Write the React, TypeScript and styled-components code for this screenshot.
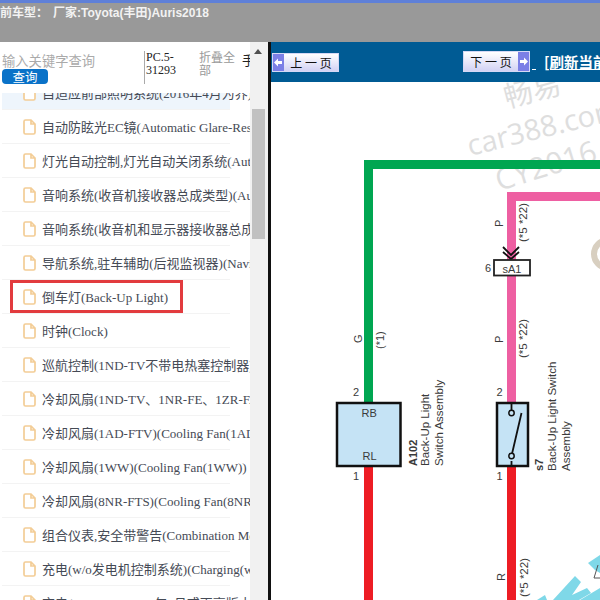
import { FC } from 'react';
import styled, { createGlobalStyle } from 'styled-components';

const GlobalStyle = createGlobalStyle`
  html, body {
    width: 600px;
    height: 600px;
    margin: 0;
    overflow: hidden;
    background: #fff;
  }
  * { box-sizing: border-box; }
`;

const Page = styled.div`
  display: flex;
  flex-direction: column;
  width: 600px;
  height: 600px;
  overflow: hidden;
  font-family: 'Liberation Serif', 'Noto Sans CJK SC', serif;
`;

const TopBar = styled.header`
  flex: none;
  height: 42px;
  padding: 3px 0 0;
  overflow: hidden;
  white-space: nowrap;
  background: #999;
  border-top: 3px solid #5f80d8;
  font: bold 12px/15px 'Liberation Sans', 'Noto Sans CJK SC', sans-serif;
  color: #f2f2f2;
`;

const CarType = styled.span`
  display: inline-block;
  margin-left: -12px;
`;

const Maker = styled.span`
  margin-left: 5px;
`;

const Main = styled.div`
  display: flex;
  flex: 1;
  min-height: 0;
`;

const Sidebar = styled.aside`
  display: flex;
  flex: none;
  width: 271px;
  border-right: 3px solid #111;
`;

const SideContent = styled.div`
  display: flex;
  flex-direction: column;
  width: 250px;
  overflow: hidden;
`;

const SearchHeader = styled.div`
  position: relative;
  z-index: 1;
  display: flex;
  flex: none;
  height: 51px;
  background: #fff;
`;

const SearchBox = styled.div`
  display: flex;
  flex: none;
  flex-direction: column;
  width: 144px;
  padding: 10px 0 0 2px;
`;

const SearchInput = styled.input`
  width: 130px;
  height: 17px;
  padding: 0;
  border: 0;
  outline: 0;
  font: 13.300px/17px 'Noto Sans CJK SC', sans-serif;
  &::placeholder { color: #aaa; opacity: 1; }
`;

const SearchButton = styled.button`
  width: 46px;
  height: 15px;
  padding: 0;
  border: 0;
  border-radius: 4px;
  background: #0a72c8;
  color: #fff;
  font: 12.500px/15px 'Noto Sans CJK SC', sans-serif;
`;

const PartCode = styled.div`
  flex: none;
  width: 55px;
  height: 33px;
  margin-top: 9px;
  padding-left: 1px;
  border-left: 1px solid #aaa;
  font-size: 12px;
  line-height: 12.500px;
  color: #222;
`;

const Collapse = styled.div`
  flex: none;
  width: 43px;
  padding-top: 8px;
  font: 12px/13px 'Noto Sans CJK SC', sans-serif;
  color: #999;
`;

const Clipped = styled.div`
  flex: none;
  width: 8px;
  padding-top: 11px;
  overflow: hidden;
  font: 13px/14px 'Noto Sans CJK SC', sans-serif;
  color: #222;
`;

const TreeList = styled.ul`
  flex: none;
  margin: -17px 0 0;
  padding: 0;
  list-style: none;
`;

const TreeRow = styled.li<{ $active?: boolean }>`
  position: relative;
  display: flex;
  align-items: center;
  gap: 6px;
  width: 228px;
  height: 34px;
  margin-left: 2px;
  padding-left: 21px;
  white-space: nowrap;
  background: ${({ $active }) => ($active ? '#eef5fc' : 'transparent')};
  border-bottom: 1px solid #f3f3f3;
  font-size: 13px;
  color: #454a55;
`;

const Highlight = styled.span`
  position: absolute;
  top: 0;
  left: 8px;
  width: 173px;
  height: 33px;
  border: 3px solid #e23b3e;
`;

const FileShape = styled.svg`
  flex: none;
  width: 13px;
  height: 16px;
`;

const Scrollbar = styled.div`
  display: flex;
  flex: none;
  flex-direction: column;
  align-items: center;
  width: 18px;
  background: #f1f1f1;
`;

const ScrollArrow = styled.span`
  flex: none;
  width: 0;
  height: 0;
  margin: 7px 0 0 -3px;
  border: 4px solid transparent;
  border-top: 0;
  border-bottom: 5px solid #505050;
`;

const ScrollThumb = styled.span`
  flex: none;
  width: 13px;
  height: 130px;
  margin: 55px 1px 0 0;
  background: #c1c1c1;
`;

const Content = styled.section`
  display: flex;
  flex: 1;
  flex-direction: column;
  min-width: 0;
`;

const Toolbar = styled.div`
  display: flex;
  flex: none;
  align-items: center;
  height: 40px;
  overflow: hidden;
  background: #005b94;
`;

const PageButton = styled.button<{ $next?: boolean }>`
  display: flex;
  flex: none;
  flex-direction: ${({ $next }) => ($next ? 'row-reverse' : 'row')};
  align-items: stretch;
  width: 67px;
  height: ${({ $next }) => ($next ? '21px' : '19px')};
  margin: ${({ $next }) => ($next ? '-1px 0 0 124px' : '1px 0 0 1px')};
  padding: 0;
  border: 1px solid #d5d8f5;
  background: linear-gradient(#fff, #d2d2f4);
  font: 12px/1 'Noto Sans CJK SC', sans-serif;
  color: #111;
`;

const ArrowCap = styled.span`
  display: flex;
  flex: none;
  align-items: center;
  justify-content: center;
  width: 11px;
  background: #7b7fe6;
`;

const ButtonLabel = styled.span`
  flex: 1;
  align-self: center;
  white-space: pre;
`;

const EmptyLink = styled.a`
  flex: none;
  width: 4px;
  height: 4px;
  margin: 12px 0 0 2px;
  border-bottom: 1px solid #fff;
`;

const Refresh = styled.a`
  flex: none;
  margin-left: 8px;
  font: bold 14.500px/16px 'Noto Sans CJK SC', sans-serif;
  white-space: nowrap;
  color: #fff;
  text-decoration: underline;
`;

const Diagram = styled.svg`
  display: block;
  flex: 1;
  width: 329px;
  min-height: 0;
`;

const rows = [
  '自适应前部照明系统(2016年4月为界)',
  '自动防眩光EC镜(Automatic Glare-Resistant EC Mirror)',
  '灯光自动控制,灯光自动关闭系统(Automatic Light Control)',
  '音响系统(收音机接收器总成类型)(Audio System)',
  '音响系统(收音机和显示器接收器总成类型)',
  '导航系统,驻车辅助(后视监视器)(Navigation System)',
  '倒车灯(Back-Up Light)',
  '时钟(Clock)',
  '巡航控制(1ND-TV不带电热塞控制器)',
  '冷却风扇(1ND-TV、1NR-FE、1ZR-FAE)',
  '冷却风扇(1AD-FTV)(Cooling Fan(1AD-FTV))',
  '冷却风扇(1WW)(Cooling Fan(1WW))',
  '冷却风扇(8NR-FTS)(Cooling Fan(8NR-FTS))',
  '组合仪表,安全带警告(Combination Meter)',
  '充电(w/o发电机控制系统)(Charging(w/o))',
  '充电(2GR-FKS 2016年9月或更高版本)',
];

const FileIcon: FC = () => (
  <FileShape viewBox="0 0 13 16">
    <path
      d="M1 2.5q0-1.5 1.5-1.5H8l4 4v8.500q0 1.500-1.500 1.500h-8q-1.500 0-1.500-1.500zM8 1v4h4"
      fill="#fff"
      stroke="#f3cd96"
      strokeWidth="1.7"
    />
  </FileShape>
);

const Arrow: FC<{ flip?: boolean }> = ({ flip }) => (
  <svg width="9" height="9" viewBox="0 0 9 9">
    <path
      d={flip ? 'M9 4.500 5 .5V3H1v3h4v2.500z' : 'M0 4.500 4 .5V3h4v3H4v2.500z'}
      fill="#fff"
    />
  </svg>
);

const vLabel = (x: number, y: number, text: string, size = 11.500, weight = 400) => (
  <text
    transform={`translate(${x} ${y}) rotate(-90)`}
    fontSize={size}
    fontWeight={weight}
    fontFamily="'Liberation Sans', sans-serif"
    fill="#3a3a3a"
  >
    {text}
  </text>
);

const hLabel = (x: number, y: number, text: string, size = 11) => (
  <text
    x={x}
    y={y}
    fontSize={size}
    fontFamily="'Liberation Sans', sans-serif"
    fill="#3a3a3a"
  >
    {text}
  </text>
);

const Wiring: FC = () => (
  <Diagram viewBox="271 82 329 518">
    <g fontFamily="'Open Sans', 'Noto Sans CJK SC', sans-serif" fill="#dedede">
      <text transform="translate(507 108) rotate(-15)" fontSize="29" fontFamily="'Noto Sans CJK SC', sans-serif">
        畅易
      </text>
      <text transform="translate(470 156) rotate(-14)" fontSize="29">
        car388.com
      </text>
      <text transform="translate(499 191) rotate(-17)" fontSize="30">
        CY2016
      </text>
    </g>

    <path d="M368.500 402V164.500H600" fill="none" stroke="#00a651" strokeWidth="9" />
    <path d="M511.500 402V196.500H600" fill="none" stroke="#ee5fa2" strokeWidth="9" />
    <path d="M368.500 467V600M511.500 467V600" fill="none" stroke="#ed1c24" strokeWidth="9" />

    <path d="M503 247l8 8 8-8M503 252l8 7 8-7" fill="none" stroke="#111" strokeWidth="1.800" />
    <rect x="494" y="260" width="36" height="15.500" fill="#fff" stroke="#222" strokeWidth="1.800" />
    {hLabel(502.500, 272.500, 'sA1')}
    {hLabel(485, 271.500, '6')}

    <rect x="337" y="403" width="63.500" height="63" fill="#c5e3f5" stroke="#111" strokeWidth="2.500" />
    {hLabel(361.500, 417, 'RB')}
    {hLabel(362.500, 460, 'RL')}
    {hLabel(353, 396, '2')}
    {hLabel(353, 480, '1')}

    <rect x="497" y="403" width="31" height="63" fill="#c5e3f5" stroke="#111" strokeWidth="2.500" />
    <path d="M511.500 403v7M511.500 461v5M511.500 456l10-43" fill="none" stroke="#111" strokeWidth="1.800" />
    <circle cx="511.500" cy="413" r="2.700" fill="#c5e3f5" stroke="#111" strokeWidth="1.500" />
    <circle cx="511.500" cy="456" r="2.700" fill="#c5e3f5" stroke="#111" strokeWidth="1.500" />
    {hLabel(496.500, 396, '2')}
    {hLabel(496.500, 480, '1')}

    {vLabel(362, 343, 'G', 11)}
    {vLabel(384, 349, '(*1)', 11)}
    {vLabel(503, 227, 'P', 11)}
    {vLabel(527, 242, '(*5 *22)')}
    {vLabel(503, 343, 'P', 11)}
    {vLabel(527, 358, '(*5 *22)')}
    {vLabel(505, 581, 'R', 11)}
    {vLabel(527.500, 597, '(*5 *22)')}

    {vLabel(417, 466, 'A102', 11, 700)}
    {vLabel(429, 466, 'Back-Up Light')}
    {vLabel(443, 466, 'Switch Assembly')}
    {vLabel(543, 471, 's7', 11, 700)}
    {vLabel(556, 471, 'Back-Up Light Switch')}
    {vLabel(570, 471, 'Assembly')}

    <circle cx="608" cy="254" r="14" fill="none" stroke="#d8cfc0" strokeWidth="6" />

    <g fill="#7fd8e8">
      <path d="M537 600l8-5 2 5z" />
      <path d="M553 600l22-24 6 6-9 13 15-7 4 5-12 7z" />
      <path d="M588 563l12-8v18l-5-3z" />
      <path d="M580 600l20-12v12z" />
    </g>
    <path d="M598 565l-4 13h6" fill="none" stroke="#555" strokeWidth="1" />
  </Diagram>
);

export default function App() {
  return (
    <Page>
      <GlobalStyle />
      <TopBar>
        <CarType>
          当前车型：<Maker>厂家:Toyota(丰田)Auris2018</Maker>
        </CarType>
      </TopBar>
      <Main>
        <Sidebar>
          <SideContent>
            <SearchHeader>
              <SearchBox>
                <SearchInput placeholder="输入关键字查询" />
                <SearchButton>查询</SearchButton>
              </SearchBox>
              <PartCode>PC.5-31293</PartCode>
              <Collapse>折叠全部</Collapse>
              <Clipped>手</Clipped>
            </SearchHeader>
            <TreeList>
              {rows.map((row, index) => (
                <TreeRow key={row} $active={index === 0}>
                  <FileIcon />
                  {row}
                  {index === 6 && <Highlight />}
                </TreeRow>
              ))}
            </TreeList>
          </SideContent>
          <Scrollbar>
            <ScrollArrow />
            <ScrollThumb />
          </Scrollbar>
        </Sidebar>
        <Content>
          <Toolbar>
            <PageButton>
              <ArrowCap>
                <Arrow />
              </ArrowCap>
              <ButtonLabel>上 一 页</ButtonLabel>
            </PageButton>
            <PageButton $next>
              <ArrowCap>
                <Arrow flip />
              </ArrowCap>
              <ButtonLabel>下 一 页</ButtonLabel>
            </PageButton>
            <EmptyLink />
            <Refresh>[刷新当前页]</Refresh>
          </Toolbar>
          <Wiring />
        </Content>
      </Main>
    </Page>
  );
}
